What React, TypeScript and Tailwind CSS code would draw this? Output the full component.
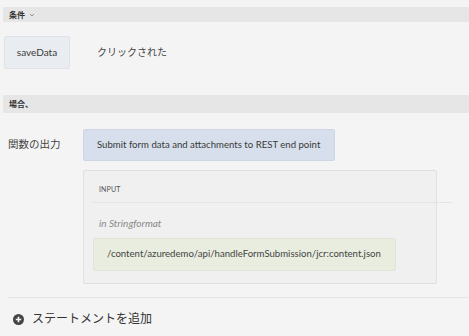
import React from "react";

export default function App() {
  return (
    <div
      className="w-[469px] h-[336px] bg-[#f4f4f4] overflow-hidden pt-[7px]"
      style={{ fontFamily: 'Lato, "Noto Sans CJK JP", sans-serif' }}
    >
      <div className="ml-[3px] h-[15px] bg-[#e6e6e6] flex items-center pl-[6px] text-[8px] font-bold text-[#333]">
        <span>条件</span>
        <svg className="ml-[4px]" width="6" height="4" viewBox="0 0 6 4">
          <path d="M1 1 L3 3 L5 1" fill="none" stroke="#888" strokeWidth="0.9" />
        </svg>
      </div>

      <div className="mt-[14px] flex items-center">
        <div className="ml-[4px] w-[66px] h-[33px] bg-[#e9ecf1] border border-[#dfe3e9] rounded-[2px] flex items-center justify-center text-[10px] text-[#3a3a3a]">
          saveData
        </div>
        <div className="ml-[27px] text-[10px] text-[#444]">クリックされた</div>
      </div>

      <div className="mt-[26px] ml-[3px] h-[18px] bg-[#e6e6e6] flex items-center pl-[6px] text-[8px] font-bold text-[#333]">
        場合、
      </div>

      <div className="mt-[16px] flex items-center">
        <div className="ml-[8px] w-[75px] text-[10.5px] text-[#444]">関数の出力</div>
        <div className="w-[252px] h-[32px] bg-[#d6dfeb] border border-[#cdd6e2] rounded-[2px] flex items-center pl-[13px] text-[9.6px] text-[#3a3a3a] whitespace-nowrap">
          Submit form data and attachments to REST end point
        </div>
      </div>

      <div className="mt-[9px] ml-[83px] w-[354px] h-[114px] bg-[#f0f0f0] border border-[#e0e0e0] rounded-[2px] pl-[9px]">
        <div className="h-[31px] flex items-end pb-[8px] pl-[6px] text-[7px] text-[#555] tracking-[0.02em]">
          INPUT
        </div>
        <div className="h-px w-[359px] bg-[#e4e4e4]" />
        <div className="h-[35px] flex items-center pt-[5px] pl-[6px] text-[10px] italic text-[#888]">
          in Stringformat
        </div>
        <div className="w-[303px] h-[33px] bg-[#e8eddf] border border-[#dfe5d6] rounded-[2px] flex items-center pl-[13px] text-[9.6px] text-[#444] whitespace-nowrap">
          /content/azuredemo/api/handleFormSubmission/jcr:content.json
        </div>
      </div>

      <div className="mt-[13px] ml-[8px] h-px bg-[#e6e6e6]" />

      <div className="mt-[12px] ml-[13px] flex items-center">
        <svg width="11" height="11" viewBox="0 0 12 12">
          <circle cx="6" cy="6" r="6" fill="#444" />
          <path d="M6 3 V9 M3 6 H9" stroke="#f4f4f4" strokeWidth="1.8" />
        </svg>
        <span className="ml-[8px] text-[12px] text-[#333]">ステートメントを追加</span>
      </div>
    </div>
  );
}
